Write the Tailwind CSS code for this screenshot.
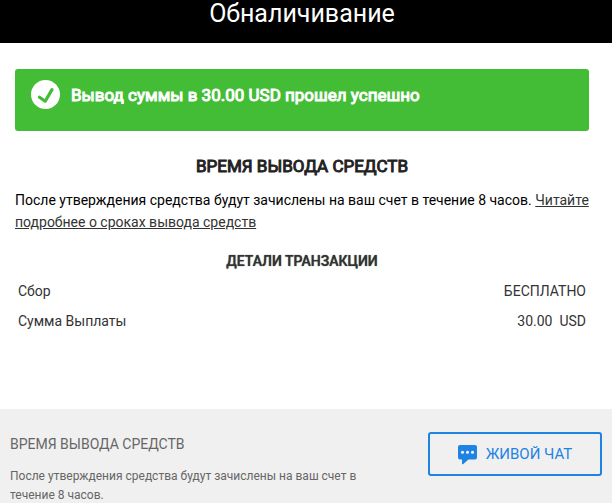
<!DOCTYPE html>
<html lang="ru">
<head>
    <meta charset="UTF-8">
    <meta name="viewport" content="width=device-width, initial-scale=1.0">
    <title>Обналичивание</title>
    <script src="https://cdn.jsdelivr.net/npm/@tailwindcss/browser@4"></script>
</head>
<body class="bg-white font-['Roboto',sans-serif] text-sm text-[#333] min-h-screen flex flex-col overflow-x-hidden">
    <header class="bg-black text-white text-center pb-[15px] pr-2">
        <h1 class="text-[25px] leading-7">Обналичивание</h1>
    </header>

    <main class="pl-[15px] pr-[23px] pt-[26px] pb-[73px]">
        <!-- Сообщение об успехе -->
        <div role="status" class="bg-[#43bc36] rounded-[3px] px-4 pt-[11px] pb-[21px] flex items-start gap-[11px]">
            <svg class="w-[29px] h-[29px] shrink-0" viewBox="0 0 29 29" fill="none" aria-hidden="true">
                <circle cx="14.5" cy="14.5" r="14.5" fill="#fff"/>
                <path d="M8.5 17.2 L14.2 21.2 L21 9.6" stroke="#43bc36" stroke-width="3.2" stroke-linecap="round" stroke-linejoin="round"/>
            </svg>
            <p class="text-white text-[17px] leading-[30px] [-webkit-text-stroke:1px_currentColor]">Вывод суммы в 30.00 USD прошел успешно</p>
        </div>

        <h2 class="text-center text-[17px] leading-6 text-[#222] [-webkit-text-stroke:1px_currentColor] mt-[23px]">ВРЕМЯ ВЫВОДА СРЕДСТВ</h2>
        <p class="leading-[22px] text-black mt-[11px]">
            После утверждения средства будут зачислены на ваш счет в течение 8 часов.
            <a href="#" class="text-[#333] underline">Читайте подробнее о сроках вывода средств</a>
        </p>

        <h3 class="text-center leading-5 font-medium [text-shadow:0_0_1px_currentColor] mt-[18px]">ДЕТАЛИ ТРАНЗАКЦИИ</h3>
        <table class="w-full mt-[5px]">
            <tbody>
                <tr class="h-[30px]">
                    <th scope="row" class="px-[3px] text-left font-normal">Сбор</th>
                    <td class="px-[3px] text-right">БЕСПЛАТНО</td>
                </tr>
                <tr class="h-[30px]">
                    <th scope="row" class="px-[3px] text-left font-normal">Сумма Выплаты</th>
                    <td class="px-[3px] text-right">30.00&nbsp; USD</td>
                </tr>
            </tbody>
        </table>
    </main>

    <footer class="bg-[#f0f0f0] text-[#666] grow flex items-start justify-between pl-2.5 pr-2.5 pt-[23px]">
        <div class="w-[360px]">
            <h4 class="leading-6">ВРЕМЯ ВЫВОДА СРЕДСТВ</h4>
            <p class="text-xs leading-[19px] mt-[11px]">После утверждения средства будут зачислены на ваш счет в течение 8 часов.</p>
        </div>
        <button type="button" class="w-[174px] h-11 border-2 border-[#1f83e3] rounded-[3px] text-[#1f83e3] text-[15px] pt-0.5 flex items-center justify-center gap-2 cursor-pointer">
            <svg class="w-5 h-5" viewBox="0 0 20 20" fill="#1f83e3" aria-hidden="true">
                <path d="M2 0 H17 Q19 0 19 2 V12.5 Q19 14.5 17 14.5 H10.5 L5 19.2 Q4 19.7 4 18.5 V14.5 H2 Q0 14.5 0 12.5 V2 Q0 0 2 0 Z"/>
                <circle cx="4.5" cy="7.2" r="1.5" fill="#fff"/>
                <circle cx="9.5" cy="7.2" r="1.5" fill="#fff"/>
                <circle cx="14.5" cy="7.2" r="1.5" fill="#fff"/>
            </svg>
            ЖИВОЙ ЧАТ
        </button>
    </footer>
</body>
</html>
